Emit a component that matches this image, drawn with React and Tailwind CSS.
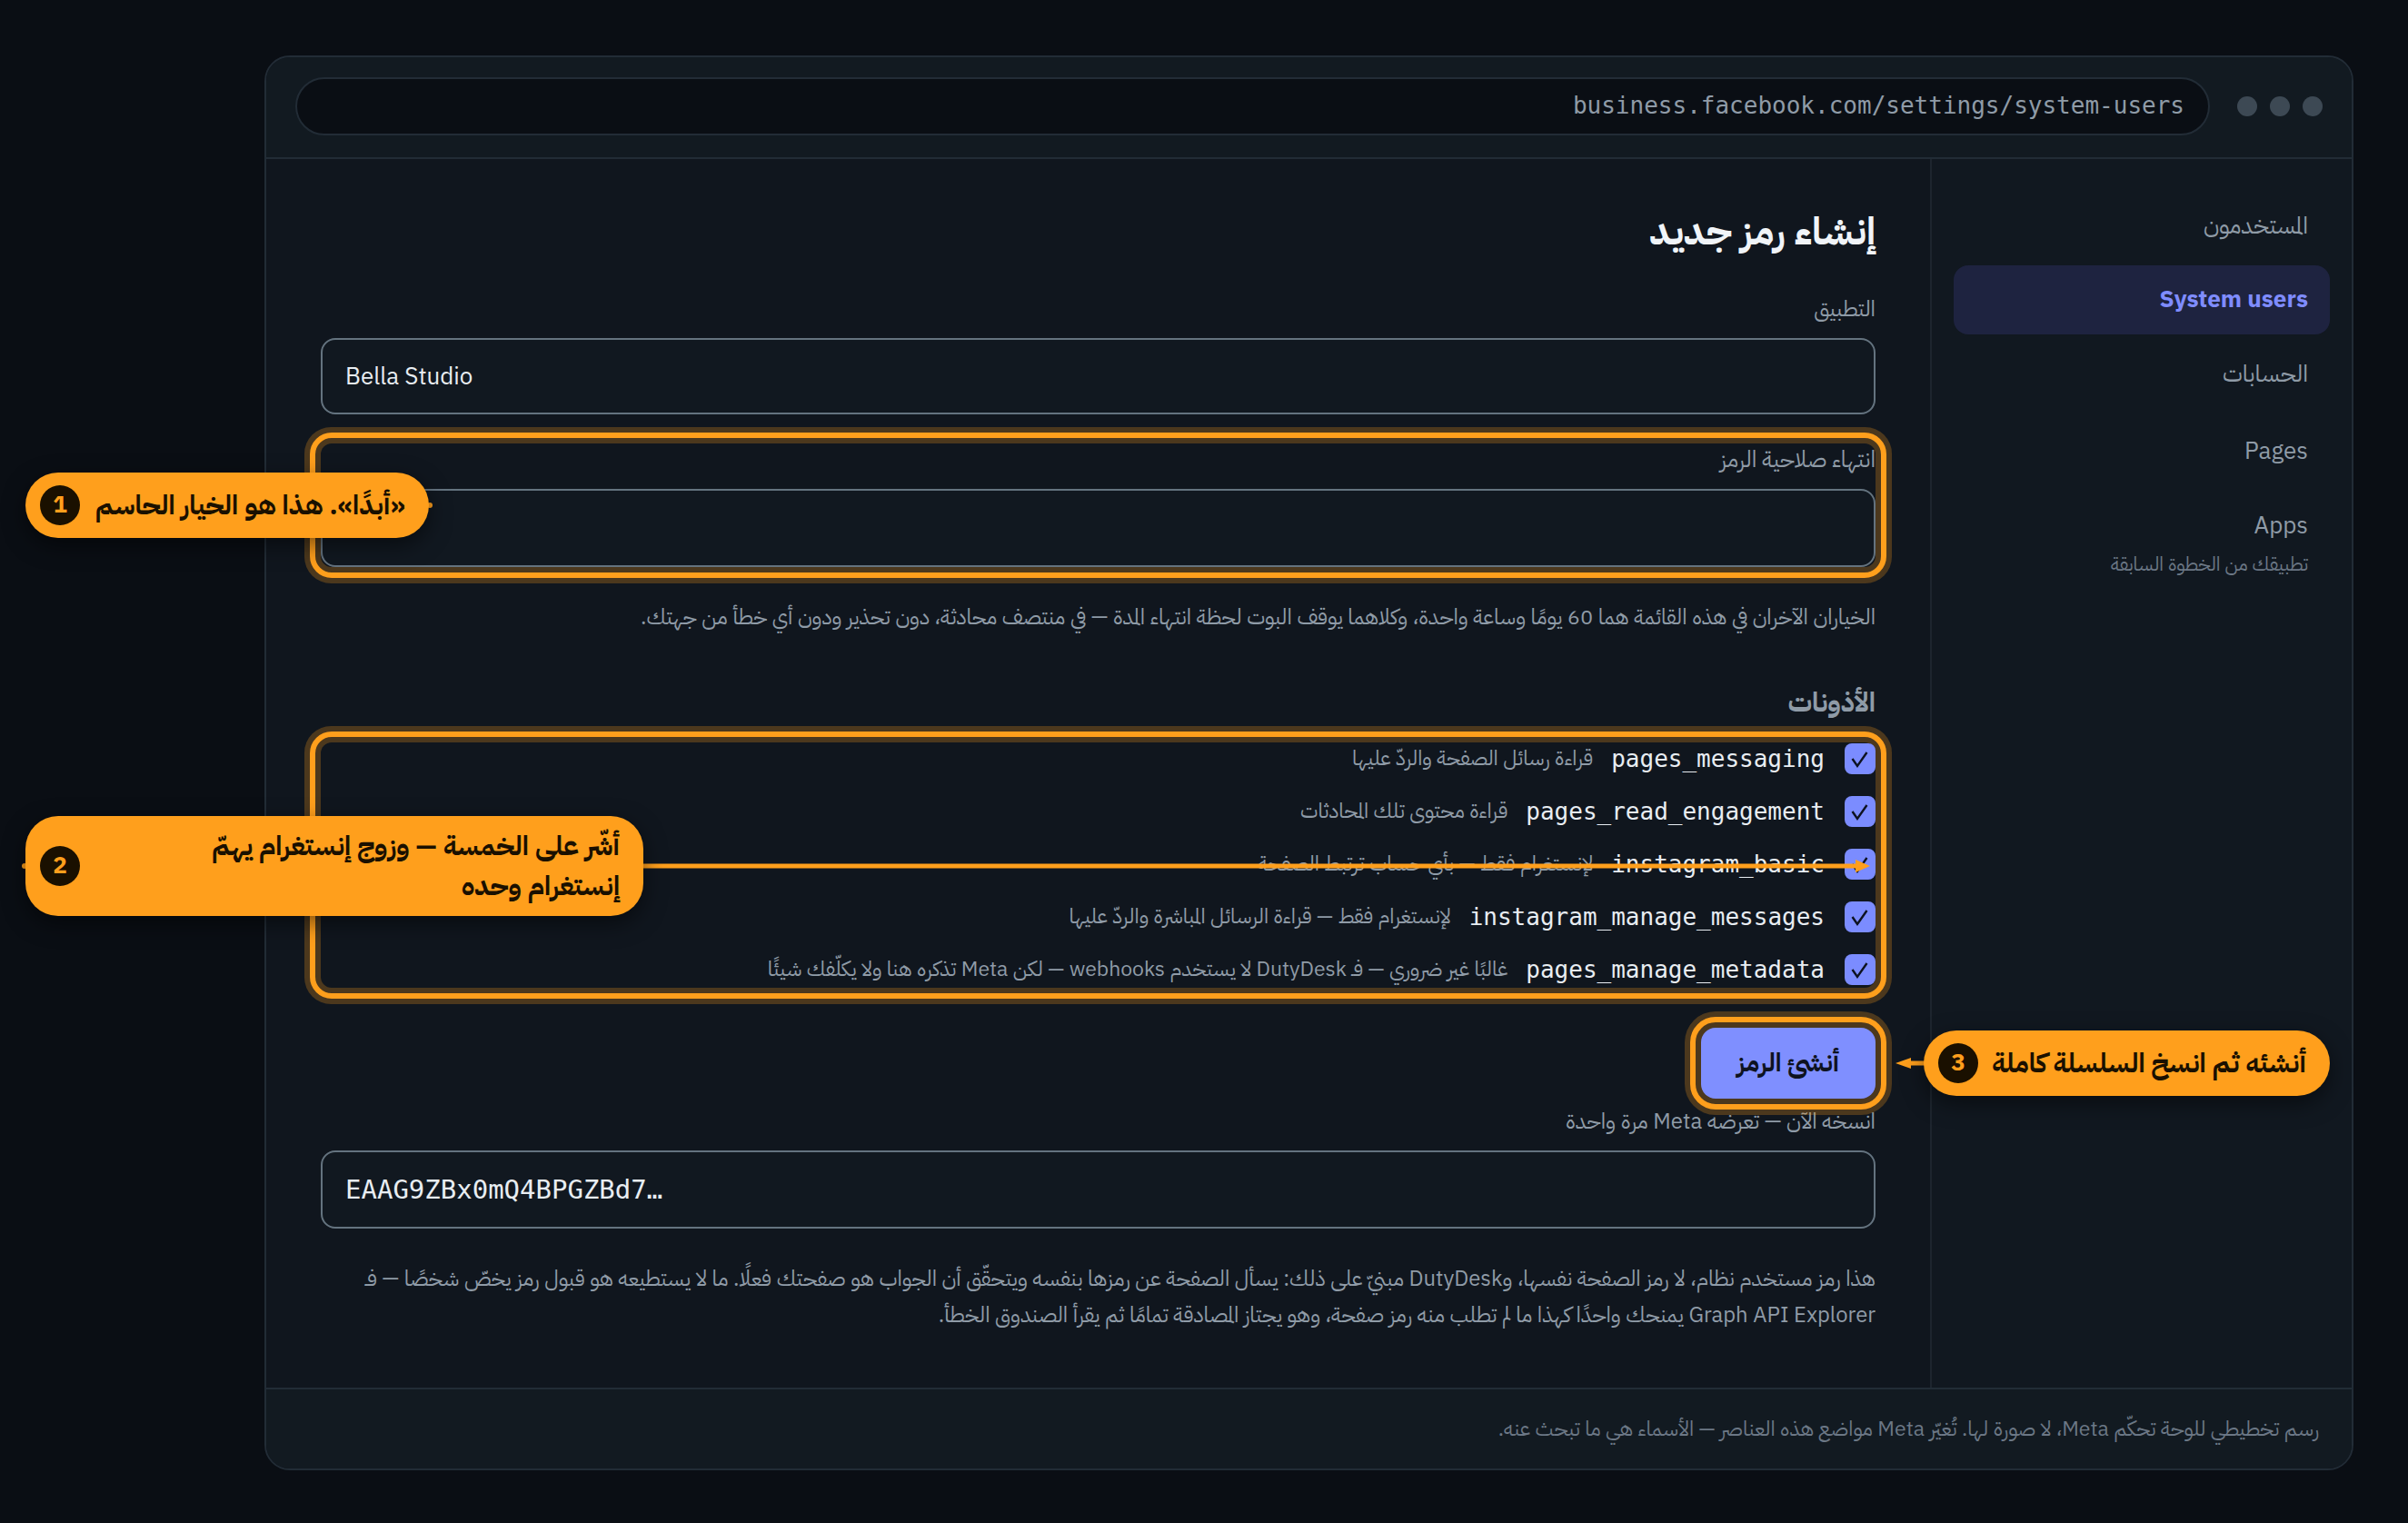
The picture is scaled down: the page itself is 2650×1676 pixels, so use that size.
const sans = { fontFamily: '"IBM Plex Sans Arabic", "Noto Sans", sans-serif' };

function Perm({ name, desc }) {
  return (
    <div className="flex h-[36px] items-center gap-[22px]">
      <span className="flex h-[34px] w-[34px] shrink-0 items-center justify-center rounded-[8px] bg-[#7b8cff]">
        <svg width="34" height="34" viewBox="0 0 34 34" fill="none" stroke="#0d1220" strokeWidth="2.4">
          <path d="M8.5 17L14 25L24.5 10" />
        </svg>
      </span>
      <div className="flex items-center gap-[20px]">
        <span dir="ltr" className="font-['DejaVu_Sans_Mono'] text-[26px] leading-[36px] text-[#e8edf2]">{name}</span>
        <span className="text-[23px] leading-[36px] text-[#8f9ba7]">{desc}</span>
      </div>
    </div>
  );
}

function Callout({ n, className, textClass, children }) {
  return (
    <div dir="ltr" className={`absolute z-30 flex items-center gap-[10px] rounded-[36px] bg-[#ff9f1c] pl-[16px] pr-[26px] shadow-[0_8px_24px_rgba(0,0,0,0.5)] ${className}`}>
      <span className="flex h-[44px] w-[44px] shrink-0 items-center justify-center rounded-full bg-[#1a1000] text-[26px] font-bold leading-none text-[#ff9f1c]">{n}</span>
      <span dir="rtl" className={`flex-1 text-right text-[29.6px] font-bold leading-[44px] text-[#1a1000] ${textClass || ""}`}>{children}</span>
    </div>
  );
}

function NavItem({ active, className, children }) {
  return (
    <div className={`flex h-[76px] items-center rounded-[16px] px-[24px] text-[26px] leading-[36px] ${active ? "bg-[#1e2340] font-bold text-[#7f8cff]" : "text-[#8f9ba7]"} ${className || ""}`}>
      {children}
    </div>
  );
}

const hl = "relative z-10 rounded-[12px] outline-[6px] outline-solid outline-offset-[6px] outline-[#ff9f1c] shadow-[0_0_0_18px_rgba(255,159,28,0.25)]";
const label = "text-[24px] leading-[36px] text-[#8f9ba7]";
const input = "flex h-[84px] items-center rounded-[16px] border-2 border-[#64737f] bg-[#111820] px-[25px] text-[#e8edf2]";

export default function App() {
  return (
    <div dir="rtl" style={sans} className="relative h-[1676px] w-[2650px] overflow-hidden bg-[#0a0e14] pl-[291px] pr-[60px] pt-[61px] [font-variant-ligatures:common-ligatures_discretionary-ligatures]">
      <div className="flex h-[1557px] flex-col overflow-hidden rounded-[28px] border-2 border-[#222c36] bg-[#10161e]">
        <div className="flex h-[112px] shrink-0 items-center gap-[30px] border-b-2 border-[#222c36] bg-[#121a21] px-[32px] pb-[2px]">
          <div className="flex gap-[14px]">
            <span className="h-[22px] w-[22px] rounded-full bg-[#3d4954]" />
            <span className="h-[22px] w-[22px] rounded-full bg-[#3d4954]" />
            <span className="h-[22px] w-[22px] rounded-full bg-[#3d4954]" />
          </div>
          <div className="flex h-[64px] flex-1 items-center rounded-full border-2 border-[#222c36] bg-[#0a0e14] px-[26px] pb-[2px]">
            <span dir="ltr" className="font-['DejaVu_Sans_Mono'] text-[26px] leading-[36px] text-[#8f9ba7]">business.facebook.com/settings/system-users</span>
          </div>
        </div>
        <div className="flex min-h-0 flex-1">
          <aside className="w-[464px] shrink-0 border-l-2 border-[#1d252e] bg-[#111820] px-[24px] pt-[36px]">
            <div className="flex flex-col gap-[6px]">
              <NavItem className="-mb-[1px]">المستخدمون</NavItem>
              <NavItem active>System users</NavItem>
              <NavItem>الحسابات</NavItem>
              <NavItem className="mt-[3px]">Pages</NavItem>
              <div className="flex flex-col px-[24px] pt-[20px]">
                <span className="text-[26px] leading-[36px] text-[#8f9ba7]">Apps</span>
                <span className="mt-[8px] text-[21px] leading-[32px] text-[#6b7785]">تطبيقك من الخطوة السابقة</span>
              </div>
            </div>
          </aside>
          <main className="min-w-0 flex-1 px-[60px] pt-[56px]">
            <h1 className="text-[42px] font-bold leading-[48px] text-[#f0f4f8]">إنشاء رمز جديد</h1>
            <div className={`mt-[43px] mb-[14px] ${label}`}>التطبيق</div>
            <div className={`${input} text-[26px]`} dir="ltr">Bella Studio</div>
            <div className={`mt-[32px] ${hl}`}>
              <div className="mb-[14px] text-[25px] leading-[36px] text-[#8f9ba7]">انتهاء صلاحية الرمز</div>
              <div className={`${input} !h-[86px]`} />
            </div>
            <p className="mt-[35px] text-[23.75px] leading-[40px] text-[#8f9ba7]">الخياران الآخران في هذه القائمة هما 60 يومًا وساعة واحدة، وكلاهما يوقف البوت لحظة انتهاء المدة — في منتصف محادثة، دون تحذير ودون أي خطأ من جهتك.</p>
            <h2 className="mt-[52px] text-[30px] font-bold leading-[44px] text-[#8f9ba7]">الأذونات</h2>
            <div className={`mt-[22px] flex flex-col gap-[22px] pb-[2px] ${hl}`}>
              <Perm name="pages_messaging" desc="قراءة رسائل الصفحة والردّ عليها" />
              <Perm name="pages_read_engagement" desc="قراءة محتوى تلك المحادثات" />
              <Perm name="instagram_basic" desc="لإنستغرام فقط — بأي حساب ترتبط الصفحة" />
              <Perm name="instagram_manage_messages" desc="لإنستغرام فقط — قراءة الرسائل المباشرة والردّ عليها" />
              <Perm name="pages_manage_metadata" desc="غالبًا غير ضروري — فـ DutyDesk لا يستخدم webhooks — لكن Meta تذكره هنا ولا يكلّفك شيئًا" />
            </div>
            <div className={`mt-[44px] flex h-[78px] w-[192px] items-center justify-center bg-[#7f8fff] text-[28px] font-bold leading-[36px] text-[#0d1220] ${hl} !rounded-[16px]`}>أنشئ الرمز</div>
            <div className={`mt-[7px] mb-[14px] ${label}`}>انسخه الآن — تعرضه Meta مرة واحدة</div>
            <div className={`${input} !h-[86px]`}>
              <span dir="ltr" className="w-full font-['DejaVu_Sans_Mono'] text-[29px] leading-[36px]">EAAG9ZBx0mQ4BPGZBd7…</span>
            </div>
            <p className="mt-[35px] text-[23.8px] leading-[40px] text-[#8f9ba7]">هذا رمز مستخدم نظام، لا رمز الصفحة نفسها، وDutyDesk مبنيّ على ذلك: يسأل الصفحة عن رمزها بنفسه ويتحقّق أن الجواب هو صفحتك فعلًا. ما لا يستطيعه هو قبول رمز يخصّ شخصًا — فـ Graph API Explorer يمنحك واحدًا كهذا ما لم تطلب منه رمز صفحة، وهو يجتاز المصادقة تمامًا ثم يقرأ الصندوق الخطأ.</p>
          </main>
        </div>
        <footer className="flex h-[89px] shrink-0 items-center border-t-2 border-[#222c36] bg-[#121a21] px-[36px] text-[23px] leading-[32px] text-[#6b7785]">
          رسم تخطيطي للوحة تحكّم Meta، لا صورة لها. تُغيّر Meta مواضع هذه العناصر — الأسماء هي ما تبحث عنه.
        </footer>
      </div>

      <svg className="absolute left-0 top-0 z-20 h-[1676px] w-[2650px]" viewBox="0 0 2650 1676" fill="#ff9f1c">
        <rect x="700" y="950.5" width="1345" height="5" />
        <polygon points="2058,953 2042,946 2042,960" />
        <rect x="2100" y="1167.5" width="20" height="5" />
        <polygon points="2086,1170 2103,1164 2103,1176" />
        <circle cx="473" cy="556" r="3" />
        <circle cx="27" cy="953" r="3" />
      </svg>

      <Callout n="1" className="left-[28px] top-[520px] h-[72px] w-[444px]">«أبدًا». هذا هو الخيار الحاسم</Callout>
      <Callout n="2" className="left-[28px] top-[898px] h-[110px] w-[680px]" textClass="pl-[40px]">أشّر على الخمسة — وزوج إنستغرام يهمّ إنستغرام وحده</Callout>
      <Callout n="3" className="left-[2117px] top-[1134px] h-[72px] w-[447px]">أنشئه ثم انسخ السلسلة كاملة</Callout>
    </div>
  );
}
